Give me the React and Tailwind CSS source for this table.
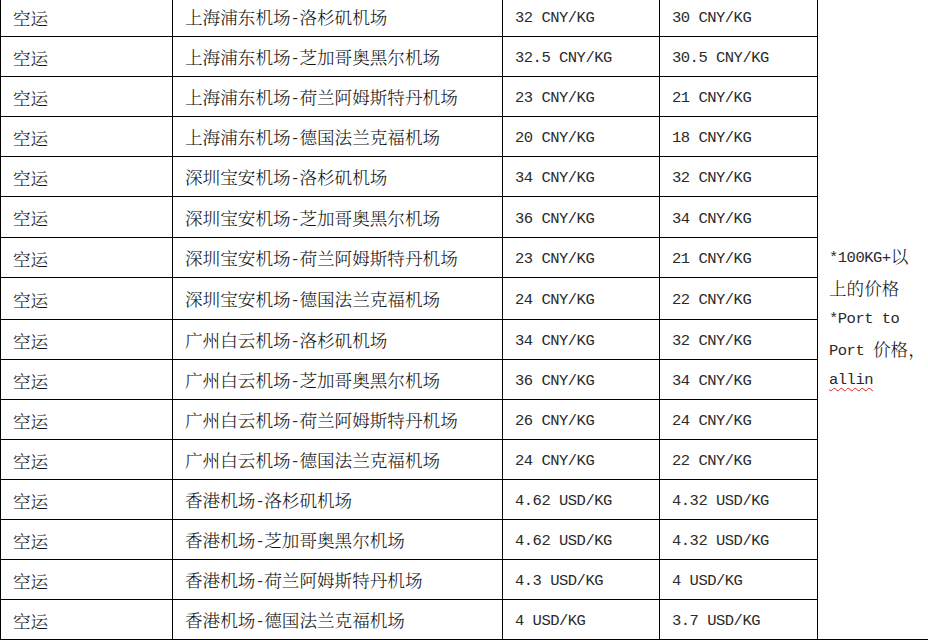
import React from "react";

const rows = [
  ["上海浦东机场-洛杉矶机场", "32 CNY/KG", "30 CNY/KG"],
  ["上海浦东机场-芝加哥奥黑尔机场", "32.5 CNY/KG", "30.5 CNY/KG"],
  ["上海浦东机场-荷兰阿姆斯特丹机场", "23 CNY/KG", "21 CNY/KG"],
  ["上海浦东机场-德国法兰克福机场", "20 CNY/KG", "18 CNY/KG"],
  ["深圳宝安机场-洛杉矶机场", "34 CNY/KG", "32 CNY/KG"],
  ["深圳宝安机场-芝加哥奥黑尔机场", "36 CNY/KG", "34 CNY/KG"],
  ["深圳宝安机场-荷兰阿姆斯特丹机场", "23 CNY/KG", "21 CNY/KG"],
  ["深圳宝安机场-德国法兰克福机场", "24 CNY/KG", "22 CNY/KG"],
  ["广州白云机场-洛杉矶机场", "34 CNY/KG", "32 CNY/KG"],
  ["广州白云机场-芝加哥奥黑尔机场", "36 CNY/KG", "34 CNY/KG"],
  ["广州白云机场-荷兰阿姆斯特丹机场", "26 CNY/KG", "24 CNY/KG"],
  ["广州白云机场-德国法兰克福机场", "24 CNY/KG", "22 CNY/KG"],
  ["香港机场-洛杉矶机场", "4.62 USD/KG", "4.32 USD/KG"],
  ["香港机场-芝加哥奥黑尔机场", "4.62 USD/KG", "4.32 USD/KG"],
  ["香港机场-荷兰阿姆斯特丹机场", "4.3 USD/KG", "4 USD/KG"],
  ["香港机场-德国法兰克福机场", "4 USD/KG", "3.7 USD/KG"],
];

// row heights copied off the ruled lines (a couple are a px taller)
const heights = ["h-[40px]", "h-[40px]", "h-[40px]", "h-[40px]", "h-[40px]", "h-[41px]", "h-[40px]", "h-[42px]",
  "h-[40px]", "h-[40px]", "h-[40px]", "h-[40px]", "h-[40px]", "h-[40px]", "h-[40px]", "h-[40px]"];

const cjk = "font-['Noto_Serif_CJK_SC','Noto_Sans_CJK_SC',sans-serif] text-[17.6px] font-light";
const latin = "font-['Liberation_Mono',monospace] text-[15.5px] tracking-[-0.5px] text-[#2a2a2a] align-[1px]";

// split a string into CJK / latin runs so each gets a half/full width look like SimSun
function Mixed({ text }) {
  const parts = text.split(/([\u3000-\u9fff\uff00-\uffef]+)/).filter(Boolean);
  return (
    <span>
      {parts.map((p, i) =>
        /[\u3000-\u9fff\uff00-\uffef]/.test(p) ? (
          <span key={i} className={cjk}>{p}</span>
        ) : (
          <span key={i} className={latin}>{p}</span>
        )
      )}
    </span>
  );
}

function Cell({ w, children }) {
  return (
    <div className={`${w} flex shrink-0 items-center border-r border-black pl-3 pt-[3px] whitespace-nowrap`}>
      {children}
    </div>
  );
}

function NoteLine({ children }) {
  return <div className="flex h-[31px] items-center whitespace-nowrap">{children}</div>;
}

export default function App() {
  return (
    <div className="h-[640px] w-[928px] overflow-hidden bg-white text-[#111]">
      <div className="-mt-[4px] flex w-[960px] border-l border-black">
        <div className="flex flex-col border-t border-black">
          {rows.map((r, i) => (
            <div key={i} className={`flex ${heights[i]} border-b border-black`}>
              <Cell w="w-[172px]"><Mixed text="空运" /></Cell>
              <Cell w="w-[330px]"><Mixed text={r[0]} /></Cell>
              <Cell w="w-[157px]"><Mixed text={r[1]} /></Cell>
              <Cell w="w-[158px]"><Mixed text={r[2]} /></Cell>
            </div>
          ))}
        </div>

        {/* merged notes cell */}
        <div className="flex flex-1 items-center border-t border-b border-r border-black pl-[11px] pt-[2px]">
          <div className="flex flex-col">
            <NoteLine><Mixed text="*100KG+以" /></NoteLine>
            <NoteLine><Mixed text="上的价格" /></NoteLine>
            <NoteLine><Mixed text="*Port to" /></NoteLine>
            <NoteLine><Mixed text="Port 价格，" /></NoteLine>
            <NoteLine>
              <span className={`${latin} underline decoration-wavy decoration-[#e02020] decoration-1 underline-offset-[3px]`}>
                allin
              </span>
            </NoteLine>
          </div>
        </div>
      </div>
    </div>
  );
}
